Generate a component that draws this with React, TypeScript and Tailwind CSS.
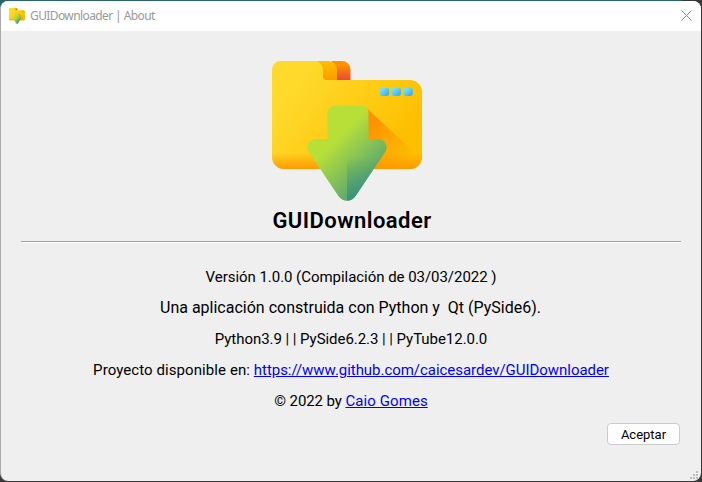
import React from "react";

function FolderArt({ className, id }: { className: string; id: string }) {
  const u = (n: string) => `url(#${id}-${n})`;
  return (
    <svg className={className} viewBox="0 0 150 141" preserveAspectRatio="none" aria-hidden="true">
      <defs>
        <linearGradient id={`${id}-body`} gradientUnits="userSpaceOnUse" x1="25" y1="15" x2="125" y2="90">
          <stop offset="0" stopColor="#ffda2d" />
          <stop offset="1" stopColor="#fdbf00" />
        </linearGradient>
        <linearGradient id={`${id}-base`} x1="0" y1="0" x2="0" y2="1">
          <stop offset="0" stopColor="#ff9100" stopOpacity="0" />
          <stop offset="1" stopColor="#ff9100" stopOpacity="0.85" />
        </linearGradient>
        <linearGradient id={`${id}-mid`} x1="0" y1="0" x2="0" y2="1">
          <stop offset="0" stopColor="#fdbf00" />
          <stop offset="1" stopColor="#ff9100" />
        </linearGradient>
        <linearGradient id={`${id}-red`} gradientUnits="userSpaceOnUse" x1="0" y1="4" x2="0" y2="19">
          <stop offset="0" stopColor="#ff9100" />
          <stop offset="1" stopColor="#e9493d" />
        </linearGradient>
        <linearGradient id={`${id}-shade`} gradientUnits="userSpaceOnUse" x1="98" y1="64" x2="138" y2="98">
          <stop offset="0" stopColor="#ff9100" />
          <stop offset="1" stopColor="#ff9100" stopOpacity="0" />
        </linearGradient>
        <linearGradient id={`${id}-arrow`} gradientUnits="userSpaceOnUse" x1="67" y1="76" x2="112" y2="121">
          <stop offset="0" stopColor="#b7df38" />
          <stop offset="1" stopColor="#459b7c" />
        </linearGradient>
        <linearGradient id={`${id}-fold`} gradientUnits="userSpaceOnUse" x1="0" y1="96" x2="0" y2="138">
          <stop offset="0" stopColor="#2f8a80" stopOpacity="0" />
          <stop offset="1" stopColor="#2f8a80" stopOpacity="0.7" />
        </linearGradient>
        <linearGradient id={`${id}-dot`} x1="0" y1="0" x2="1" y2="1">
          <stop offset="0.25" stopColor="#6ddff8" />
          <stop offset="1" stopColor="#37a1df" />
        </linearGradient>
      </defs>
      <path d="M60 0h10a8.5 8.5 0 0 1 8.5 8.5V24H60z" fill={u("red")} />
      <path d="M45 0h11.500a8.500 8.500 0 0 1 8.500 8.500V24H45z" fill={u("mid")} />
      <path d="M8.500 0H42.500a8.500 8.500 0 0 1 8.500 8.500V15.500a3.500 3.500 0 0 0 3.500 3.500H138a12 12 0 0 1 12 12V96a12 12 0 0 1-12 12H12A12 12 0 0 1 0 96V8.500A8.500 8.500 0 0 1 8.500 0Z" fill={u("body")} />
      <path d="M94 46.500 150 98.500A12 12 0 0 1 138 108H94Z" fill={u("shade")} />
      <path d="M0 92H150V96a12 12 0 0 1-12 12H12A12 12 0 0 1 0 96Z" fill={u("base")} />
      <g fill={u("dot")}>
        <rect x="107.700" y="26.500" width="9.500" height="8.500" rx="3" />
        <rect x="119.500" y="26.500" width="9.500" height="8.500" rx="3" />
        <rect x="131.300" y="26.500" width="9.500" height="8.500" rx="3" />
      </g>
      <path d="M62.500 44.800H89.500a7 7 0 0 1 7 7V78H106c7.200 0 11 7.800 6.800 13.500L84 134.500c-4.500 7-13.500 7-18 0L37.200 91.500C33 85.800 36.800 78 44 78H55.500V51.800a7 7 0 0 1 7-7Z" fill={u("arrow")} />
      <path d="M75 92h37.500L84 134.500c-2.200 3.500-5.500 5.300-9 5.300Z" fill={u("fold")} />
    </svg>
  );
}

const grip = [[6, 0], [3, 3], [6, 3], [0, 6], [3, 6], [6, 6]];

export default function App() {
  return (
    <div className="h-[482px] w-[702px] overflow-hidden font-[Roboto,sans-serif] text-black">
      <div className="h-[482px] bg-[linear-gradient(90deg,#276567_681px,#3b3839_683px),linear-gradient(#3b3839,#3b3839)] bg-[length:100%_20px,100%_100%] bg-no-repeat pt-px pr-px">
        <div className="flex h-[480px] flex-col overflow-hidden rounded-lg border-l border-[#aaaaaa] bg-[#efefef]">
          <header className="flex h-[30px] shrink-0 items-center bg-white pl-2 pr-[9px]">
            <FolderArt id="small" className="h-[16px] w-[16px]" />
            <span className="ml-[5px] font-['Noto_Sans',sans-serif] text-[12px] leading-4 tracking-[-0.6px] text-[#999999]">GUIDownloader | About</span>
            <button aria-label="Close" className="mb-[2px] ml-auto">
              <svg className="size-[11px]" viewBox="0 0 11 11" fill="none" stroke="#888888">
                <path d="m.5.5 10 10m0-10-10 10" />
              </svg>
            </button>
          </header>
          <main className="relative flex grow flex-col items-center px-5 pt-[30px]">
            <FolderArt id="large" className="mr-2 h-[141px] w-[150px] shrink-0" />
            <h1 className="mt-[5px] pl-[2px] text-[22px] leading-7 font-semibold tracking-[0.46px]">GUIDownloader</h1>
            <div className="mt-[6px] h-[2px] w-full shrink-0 border-t border-[#a0a0a0] bg-white" />
            <div className="mt-[19px] flex flex-col items-center text-[15px] leading-[31px] whitespace-pre">
              <p className="tracking-[-0.04px]">Versión 1.0.0 (Compilación de 03/03/2022 )</p>
              <p className="-mt-px mb-px pr-px text-[16px]">Una aplicación construida con Python y  Qt (PySide6).</p>
              <p className="tracking-[-0.05px]">Python3.9 | | PySide6.2.3 | | PyTube12.0.0</p>
              <p><span className="tracking-[0.08px]">Proyecto disponible en: </span><a className="tracking-[-0.04px] text-[#0000ff] underline">https://www.github.com/caicesardev/GUIDownloader</a></p>
              <p><span className="tracking-[-0.09px]">© 2022 by </span><a className="tracking-[0.08px] text-[#0000ff] underline">Caio Gomes</a></p>
            </div>
            <button className="mt-[6px] mr-px h-[22px] w-[73px] shrink-0 self-end rounded-[4px] border border-[#cccccc] bg-[#fdfdfd] pt-px text-[13px] leading-5">Aceptar</button>
            <svg className="absolute right-[3px] bottom-[2px] size-2" viewBox="0 0 8 8" fill="#bfbfbf">
              {grip.map(([x, y]) => <rect key={`${x}-${y}`} x={x} y={y} width="2" height="2" />)}
            </svg>
          </main>
        </div>
      </div>
    </div>
  );
}
